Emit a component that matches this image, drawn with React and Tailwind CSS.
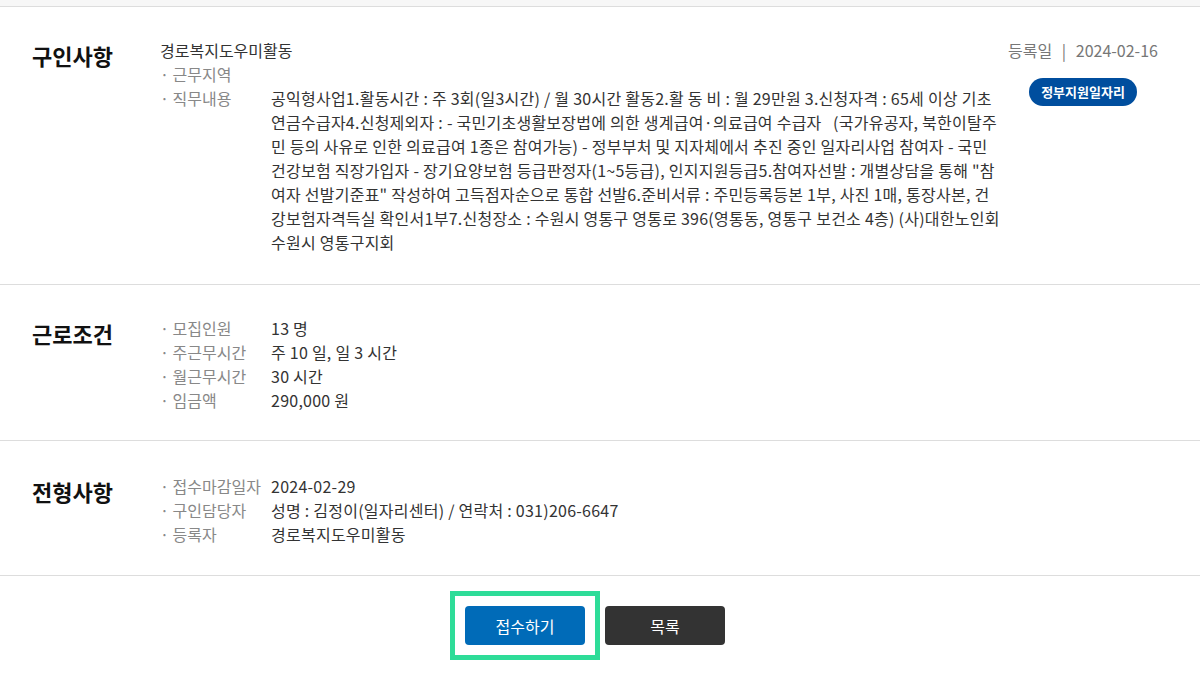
export default function App() {
  const font = { fontFamily: '"Noto Sans CJK KR", "Noto Sans", sans-serif' };
  const jobText =
    '공익형사업1.활동시간 : 주 3회(일3시간) / 월 30시간 활동2.활 동 비 : 월 29만원 3.신청자격 : 65세 이상 기초연금수급자4.신청제외자 : - 국민기초생활보장법에 의한 생계급여·의료급여 수급자 \u00a0 (국가유공자, 북한이탈주민 등의 사유로 인한 의료급여 1종은 참여가능) - 정부부처 및 지자체에서 추진 중인 일자리사업 참여자 - 국민건강보험 직장가입자 - 장기요양보험 등급판정자(1~5등급), 인지지원등급5.참여자선발 : 개별상담을 통해 "참여자 선발기준표" 작성하여 고득점자순으로 통합 선발6.준비서류 : 주민등록등본 1부, 사진 1매, 통장사본, 건강보험자격득실 확인서1부7.신청장소 : 수원시 영통구 영통로 396(영통동, 영통구 보건소 4층) (사)대한노인회 수원시 영통구지회';

  const Row = ({ label, children }) => (
    <div className="flex">
      <div className="w-[111px] shrink-0 text-[#888888]">· {label}</div>
      <div className="flex-1 text-[#333333] tracking-[0.25px]">{children}</div>
    </div>
  );

  return (
    <div className="w-[1200px] h-[673px] bg-white overflow-hidden text-[16px] leading-6" style={font}>
      <div className="h-[7px] bg-[#f7f7f7] border-b border-[#dddddd]" />

      <section className="flex pl-[32px] pr-[42px] pt-[31px] pb-[30px] border-b border-[#dddddd]">
        <h2 className="w-[128px] shrink-0 text-[22px] font-bold text-[#111111] leading-7 mt-[3px]">구인사항</h2>
        <div className="w-[840px] shrink-0">
          <div className="text-[#333333]">경로복지도우미활동</div>
          <Row label="근무지역"></Row>
          <Row label="직무내용">{jobText}</Row>
        </div>
        <div className="flex-1 flex flex-col items-end">
          <div className="w-[150px] flex flex-col items-center">
            <div className="text-[#777777] whitespace-nowrap">
              등록일 <span className="mx-[6px]">|</span> 2024-02-16
            </div>
            <span className="mt-[16px] h-[28px] px-[12px] rounded-full bg-[#004e9e] text-white text-[13px] font-bold leading-[28px]">
              정부지원일자리
            </span>
          </div>
        </div>
      </section>

      <section className="flex pl-[32px] pr-[42px] pt-[31px] pb-[28px] border-b border-[#dddddd]">
        <h2 className="w-[128px] shrink-0 text-[22px] font-bold text-[#111111] leading-7 mt-[3px]">근로조건</h2>
        <div className="flex-1">
          <Row label="모집인원">13 명</Row>
          <Row label="주근무시간">주 10 일, 일 3 시간</Row>
          <Row label="월근무시간">30 시간</Row>
          <Row label="임금액">290,000 원</Row>
        </div>
      </section>

      <section className="flex pl-[32px] pr-[42px] pt-[33px] pb-[29px] border-b border-[#dddddd]">
        <h2 className="w-[128px] shrink-0 text-[22px] font-bold text-[#111111] leading-7 mt-[3px]">전형사항</h2>
        <div className="flex-1">
          <Row label="접수마감일자">2024-02-29</Row>
          <Row label="구인담당자">성명 : 김정이(일자리센터) / 연락처 : 031)206-6647</Row>
          <Row label="등록자">경로복지도우미활동</Row>
        </div>
      </section>

      <div className="flex justify-center items-center gap-[20px] pt-[30px] pr-[10px]">
        <div className="-m-[15px] border-[5px] border-[#2edc98] p-[10px]">
          <button className="block w-[120px] h-[39px] rounded-[4px] bg-[#006bb8] text-white text-[16px]">접수하기</button>
        </div>
        <button className="w-[120px] h-[39px] rounded-[4px] bg-[#333333] text-white text-[16px]">목록</button>
      </div>
    </div>
  );
}
